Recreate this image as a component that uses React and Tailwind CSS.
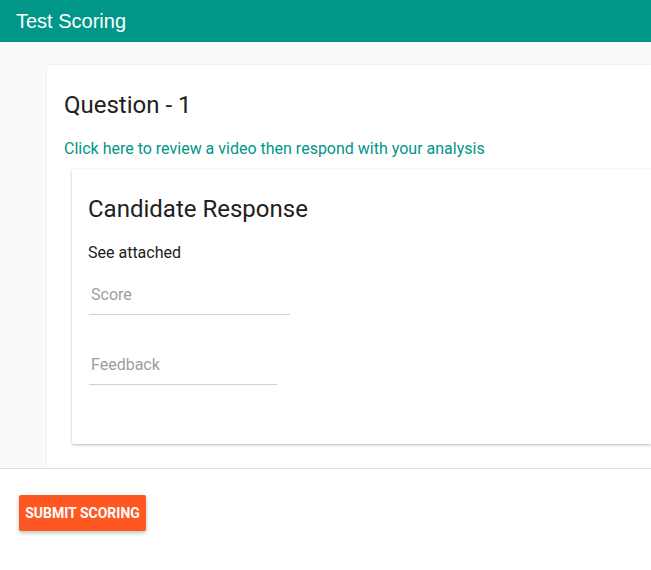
export default function App() {
  return (
    <div className="w-[651px] h-[570px] bg-white font-['Roboto',sans-serif] overflow-hidden">
      <header className="h-[42px] bg-[#009688] flex items-center px-4">
        <h1 className="font-['Liberation_Sans',Arial,sans-serif] text-[20px] text-white">Test Scoring</h1>
      </header>

      <div className="h-[427px] bg-[#fafafa] pl-[47px] pt-[23px] overflow-hidden border-b border-[#e0e0e0]">
        <div className="bg-white rounded-tl-[3px] shadow-[0_0_2px_rgba(0,0,0,0.12)] min-h-[420px] pl-[17px] pt-[24px]">
          <h2 className="text-[24px] leading-[32px] text-[#212121]">Question - 1</h2>
          <a className="block mt-[18px] text-[16px] leading-[20px] text-[#009688] cursor-pointer">
            Click here to review a video then respond with your analysis
          </a>
          <div className="ml-[8px] mt-[10px] bg-white rounded-l-[2px] shadow-[0_1px_3px_rgba(0,0,0,0.28)] h-[275px] pl-[16px] pt-[24px]">
            <h3 className="text-[24px] leading-[32px] text-[#212121]">Candidate Response</h3>
            <p className="mt-[18px] text-[16px] leading-[20px] text-[#212121]">See attached</p>
            <div className="ml-[1px] mt-[22px] w-[201px] border-b border-[#d0d0d0] pb-[9px]">
              <span className="block pl-[2px] text-[16px] leading-[20px] text-[#9e9e9e]">Score</span>
            </div>
            <div className="ml-[1px] mt-[40px] w-[188px] border-b border-[#d0d0d0] pb-[9px]">
              <span className="block pl-[2px] text-[16px] leading-[20px] text-[#9e9e9e]">Feedback</span>
            </div>
          </div>
        </div>
      </div>

      <div className="pl-[19px] pt-[26px]">
        <button className="h-[36px] w-[127px] bg-[#ff5722] rounded-[2px] text-white text-[14px] font-bold shadow-[0_2px_4px_rgba(0,0,0,0.26)]">
          SUBMIT SCORING
        </button>
      </div>
    </div>
  )
}
